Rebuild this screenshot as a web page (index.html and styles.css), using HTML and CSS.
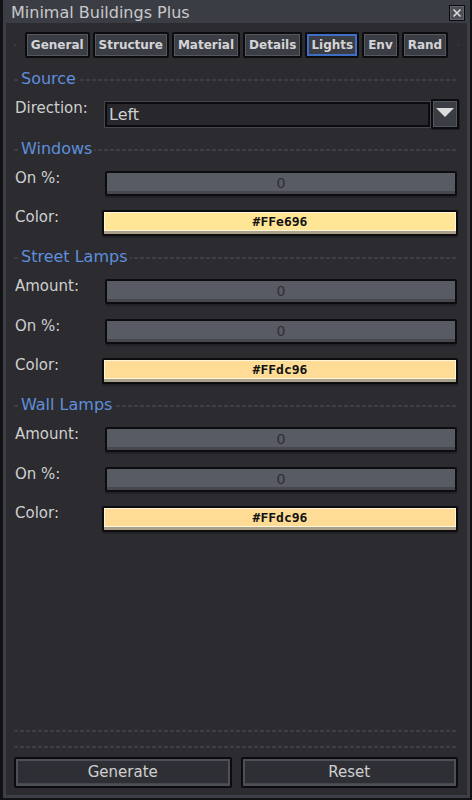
FILE: index.html
```html
<!DOCTYPE html>
<html lang="en">
<head>
<meta charset="utf-8">
<title>Minimal Buildings Plus</title>
<link rel="stylesheet" href="styles.css">
</head>
<body>
<div class="window">
  <div class="titlebar">
    <span class="title">Minimal Buildings Plus</span>
    <div class="close">
      <svg width="16" height="16" viewBox="0 0 16 16"><rect x="0.5" y="0.5" width="15" height="15" fill="#4c4f56" stroke="#0c0c0e"/><rect x="1.5" y="1.5" width="13" height="13" fill="none" stroke="#62656c"/><path d="M4.5 4.5 L11.5 11.5 M11.5 4.5 L4.5 11.5" stroke="#dcdcdc" stroke-width="1.6"/></svg>
    </div>
  </div>
  <div class="body">
    <div class="tabs">
      <div class="tab-strip">
        <div class="tab">General</div>
        <div class="tab">Structure</div>
        <div class="tab">Material</div>
        <div class="tab">Details</div>
        <div class="tab active">Lights</div>
        <div class="tab">Env</div>
        <div class="tab">Rand</div>
      </div>
    </div>

    <div class="group-head"><span>Source</span></div>
    <div class="row">
      <span class="label">Direction:</span>
      <div class="dropdown">
        <div class="dd-field">Left</div>
        <div class="dd-btn"><svg width="18" height="10" viewBox="0 0 18 10"><polygon points="0,0 18,0 9,9" fill="#dcdcdc"/></svg></div>
      </div>
    </div>

    <div class="group-head"><span>Windows</span></div>
    <div class="row">
      <span class="label">On %:</span>
      <div class="slider">0</div>
    </div>
    <div class="row color-row">
      <span class="label">Color:</span>
      <div class="color warm">#FFe696</div>
    </div>

    <div class="group-head"><span>Street Lamps</span></div>
    <div class="row">
      <span class="label">Amount:</span>
      <div class="slider">0</div>
    </div>
    <div class="row">
      <span class="label">On %:</span>
      <div class="slider">0</div>
    </div>
    <div class="row color-row">
      <span class="label">Color:</span>
      <div class="color lamp">#FFdc96</div>
    </div>

    <div class="group-head"><span>Wall Lamps</span></div>
    <div class="row">
      <span class="label">Amount:</span>
      <div class="slider">0</div>
    </div>
    <div class="row">
      <span class="label">On %:</span>
      <div class="slider">0</div>
    </div>
    <div class="row color-row">
      <span class="label">Color:</span>
      <div class="color lamp">#FFdc96</div>
    </div>

    <div class="footer">
      <div class="dash"></div>
      <div class="dash second"></div>
      <div class="buttons">
        <div class="btn">Generate</div>
        <div class="btn">Reset</div>
      </div>
    </div>
  </div>
</div>
</body>
</html>
```
FILE: styles.css
```css
* { box-sizing: border-box; margin: 0; padding: 0; }

html, body {
  width: 472px;
  height: 800px;
  background: #121214;
  overflow: hidden;
}

body {
  font-family: "DejaVu Sans", "Liberation Sans", sans-serif;
  color: #cfcfcf;
}

.window {
  width: 472px;
  height: 800px;
  display: flex;
  flex-direction: column;
  border-left: 3px solid #121214;
  border-right: 2px solid #121214;
  border-bottom: 2px solid #121214;
  background: #2b2b30;
}

.titlebar {
  flex: none;
  height: 23px;
  display: flex;
  align-items: flex-start;
  background: #3b3d44;
  padding-left: 8px;
}

.title {
  font-size: 16px;
  line-height: 21px;
  padding-top: 2px;
  color: #c9c9cb;
}

.close {
  margin-left: auto;
  margin-top: 5px;
  margin-right: 5px;
  width: 16px;
  height: 16px;
}
.close svg { display: block; }

.body {
  flex: 1;
  display: flex;
  flex-direction: column;
  border-left: 3px solid #3c3f46;
  border-right: 3px solid #3c3f46;
  border-bottom: 3px solid #3c3f46;
  padding: 9px 9px 7px 9px;
}

/* tabs */
.tabs {
  display: flex;
  justify-content: center;
  height: 26px;
  margin: 0 -1px;
  background-image: repeating-linear-gradient(90deg, #3e3f46 0 4px, transparent 4px 6px);
  background-size: 100% 2px;
  background-position: 0 12px;
  background-repeat: no-repeat;
}

.tab-strip {
  display: flex;
  gap: 3px;
  padding: 0 9px;
  background: #2b2b30;
}

.tab {
  height: 26px;
  padding: 0 4px;
  border: 2px solid #0c0c0e;
  border-radius: 2px;
  background: #3b3d44;
  box-shadow: inset 0 0 0 1px #54575e;
  font-weight: bold;
  font-size: 12px;
  line-height: 22px;
  color: #d4d4d6;
}

.tab.active {
  box-shadow: inset 0 0 0 2px #3e6ec6;
}

/* group headings */
.group-head {
  height: 18px;
  margin: 12px 0 0 -1px;
  background-image: repeating-linear-gradient(90deg, #3e3f46 0 4px, transparent 4px 6px);
  background-size: 100% 2px;
  background-position: 0 9px;
  background-repeat: no-repeat;
  font-size: 16px;
  line-height: 18px;
  color: #5f8fdc;
}
.group-head span {
  background: #2b2b30;
  padding: 0 2px;
  margin-left: 5px;
}

/* rows */
.row {
  display: grid;
  grid-template-columns: 87px 1fr;
  align-items: start;
  margin-top: 13px;
}
.row + .row { margin-top: 15px; }
.row.color-row { margin-top: 14px; }

.label {
  font-size: 15px;
  line-height: 15px;
  color: #cfcfcf;
}

/* dropdown */
.dropdown {
  display: flex;
  margin-left: 2px;
  margin-right: -1px;
  height: 27px;
}
.dd-field {
  flex: 1;
  height: 27px;
  border: 1px solid #44464d;
  box-shadow: inset 0 0 0 2px #0c0c0e;
  background: #27272c;
  padding-left: 4px;
  font-size: 16px;
  line-height: 25px;
  color: #d0d0d0;
}
.dd-btn {
  width: 28px;
  height: 30px;
  margin-top: -2px;
  border: 2px solid #0c0c0e;
  border-radius: 1px;
  background: #3b3d44;
  box-shadow: inset 0 0 0 1px #53565d, 1px 1px 0 #1e1e22;
  display: flex;
  justify-content: center;
  padding-top: 7px;
}
.dd-btn svg { display: block; }

/* slider bars */
.slider {
  margin: 0 1px 0 3px;
  height: 25px;
  border: 2px solid #0c0c0e;
  border-radius: 2px;
  background: #585b63;
  box-shadow: inset 0 -3px 0 #46484e, 0 2px 0 #222226;
  text-align: center;
  font-size: 14px;
  line-height: 21px;
  color: #2e2f34;
}

/* colour swatches */
.color {
  height: 26px;
  border: 2px solid #0c0c0e;
  border-radius: 2px;
  text-align: center;
  font-family: "DejaVu Sans Mono", "Liberation Mono", monospace;
  font-weight: bold;
  font-size: 13px;
  line-height: 20px;
  color: #121212;
  box-shadow: inset 0 -3px 0 #a8a089, inset 0 -4px 0 #fff5da, inset 1px 1px 0 #fff5da, inset -1px 0 0 #fff5da, 0 2px 0 #222226;
}
.color.warm { background: #ffe696; }
.color.lamp { background: #ffdc96; }

/* footer */
.footer {
  margin-top: auto;
  display: flex;
  flex-direction: column;
}
.dash {
  height: 2px;
  margin-left: -1px;
  background-image: repeating-linear-gradient(90deg, #3e3f46 0 4px, transparent 4px 6px);
}
.dash.second { margin-top: 14px; }

.buttons {
  display: flex;
  gap: 9px;
  margin: 9px 0 0 -1px;
}
.btn {
  flex: 1;
  height: 31px;
  border: 2px solid #0c0c0e;
  border-radius: 2px;
  background: #2e2f35;
  box-shadow: inset 0 0 0 2px #4d5057, inset 0 -3px 0 #45474e;
  text-align: center;
  font-size: 15px;
  line-height: 27px;
  color: #cfcfcf;
}
```
